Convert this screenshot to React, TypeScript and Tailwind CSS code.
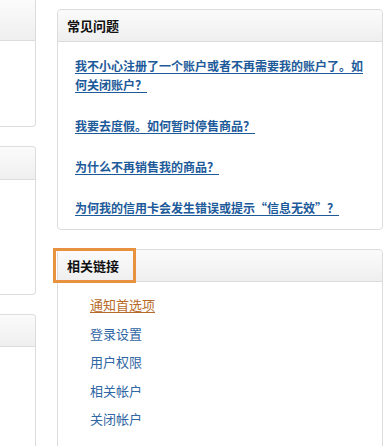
const faqs = [
  "我不小心注册了一个账户或者不再需要我的账户了。如何关闭账户？",
  "我要去度假。如何暂时停售商品？",
  "为什么不再销售我的商品？",
  "为何我的信用卡会发生错误或提示“信息无效”？",
];

const links = ["通知首选项", "登录设置", "用户权限", "相关帐户", "关闭帐户"];

function SidePanel({ className, headerH }: { className: string; headerH: string }) {
  return (
    <div className={`shrink-0 border border-l-0 border-[#dcdcdc] rounded-r-[4px] bg-white ${className}`}>
      <div className={`${headerH} border-b border-[#dcdcdc] bg-gradient-to-b from-[#fbfbfb] to-[#efefef] rounded-tr-[4px]`} />
    </div>
  );
}

export default function App() {
  return (
    <div
      className="w-[384px] h-[446px] overflow-hidden bg-white flex gap-[21px]"
      style={{ fontFamily: '"Noto Sans CJK SC", "Liberation Sans", sans-serif' }}
    >
      {/* left column, cut off */}
      <div className="w-[36px] shrink-0 flex flex-col gap-[19px]">
        <div className="shrink-0 border border-l-0 border-t-0 border-[#dcdcdc] rounded-br-[4px] h-[127px] bg-white">
          <div className="h-[41px] border-b border-[#dcdcdc] bg-gradient-to-b from-[#fbfbfb] to-[#efefef]" />
        </div>
        <SidePanel className="h-[149px]" headerH="h-[33px]" />
        <SidePanel className="h-[200px]" headerH="h-[32px]" />
      </div>

      {/* right column */}
      <div className="w-[326px] shrink-0 pt-[9px] flex flex-col gap-[19px]">
        <div className="shrink-0 border border-[#dcdcdc] rounded-[4px] bg-white">
          <div className="h-[32px] border-b border-[#dcdcdc] bg-gradient-to-b from-[#fbfbfb] to-[#efefef] rounded-t-[4px] flex items-center pl-[9px]">
            <span className="text-[13px] font-semibold text-[#111]">常见问题</span>
          </div>
          <div className="pl-[17px] pr-[16px] pt-[14px] pb-[12px] flex flex-col gap-[22px]">
            {faqs.map((q) => (
              <a key={q} href="#" className="text-[12px] leading-[19px] font-bold text-[#1d5a9a] underline underline-offset-2">
                {q}
              </a>
            ))}
          </div>
        </div>

        <div className="relative shrink-0 border border-[#dcdcdc] rounded-[4px] bg-white h-[220px]">
          <div className="h-[32px] border-b border-[#dcdcdc] bg-gradient-to-b from-[#fbfbfb] to-[#efefef] rounded-t-[4px] flex items-center pl-[9px]">
            <span className="text-[13px] font-semibold text-[#111]">相关链接</span>
          </div>
          <div className="absolute left-[-5px] top-[-2px] w-[83px] h-[35px] border-[3px] border-[#e8923f]" />
          <ul className="pl-[32px] pt-[9px] flex flex-col">
            {links.map((l, i) => (
              <li key={l} className="h-[28.4px] flex items-center">
                <a
                  href="#"
                  className={`text-[13px] ${i === 0 ? "text-[#b86a2a] underline underline-offset-2" : "text-[#2f66a3]"}`}
                >
                  {l}
                </a>
              </li>
            ))}
          </ul>
        </div>
      </div>
    </div>
  );
}
